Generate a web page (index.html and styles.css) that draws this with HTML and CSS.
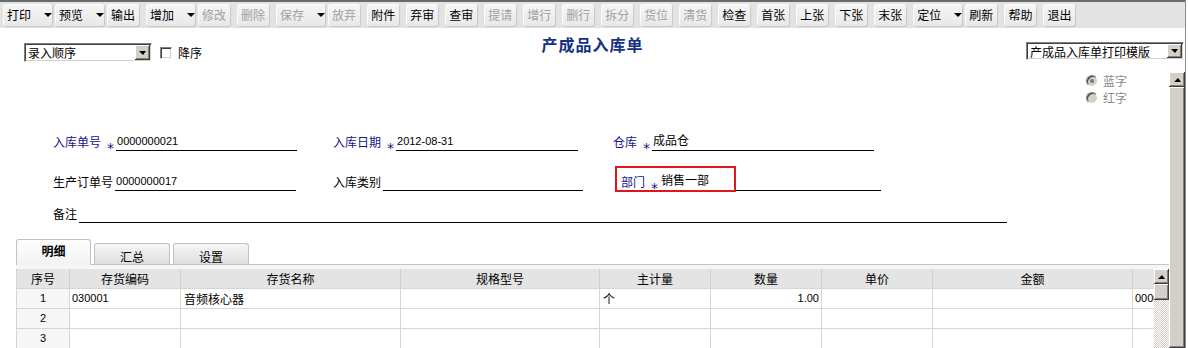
FILE: index.html
```html
<!DOCTYPE html>
<html lang="zh-CN">

<head>
    <meta charset="UTF-8">
    <title>产成品入库单</title>
    <link rel="stylesheet" href="styles.css">
</head>

<body>
    <div class="app">
        <!-- Toolbar -->
        <div class="toolbar">
            <span class="tb-btn drop">打印<i class="caret"></i></span>
            <span class="tb-btn drop">预览<i class="caret"></i></span>
            <span class="tb-btn">输出</span>
            <span class="tb-btn drop">增加<i class="caret"></i></span>
            <span class="tb-btn off">修改</span>
            <span class="tb-btn off">删除</span>
            <span class="tb-btn drop off">保存<i class="caret"></i></span>
            <span class="tb-btn off">放弃</span>
            <span class="tb-btn">附件</span>
            <span class="tb-btn">弃审</span>
            <span class="tb-btn">查审</span>
            <span class="tb-btn off">提请</span>
            <span class="tb-btn off">增行</span>
            <span class="tb-btn off">删行</span>
            <span class="tb-btn off">拆分</span>
            <span class="tb-btn off">货位</span>
            <span class="tb-btn off">清货</span>
            <span class="tb-btn">检查</span>
            <span class="tb-btn">首张</span>
            <span class="tb-btn">上张</span>
            <span class="tb-btn">下张</span>
            <span class="tb-btn">末张</span>
            <span class="tb-btn drop">定位<i class="caret"></i></span>
            <span class="tb-btn">刷新</span>
            <span class="tb-btn">帮助</span>
            <span class="tb-btn">退出</span>
        </div>

        <!-- Header -->
        <div class="head">
            <div class="head-left">
                <div class="combo combo-sort">
                    <span class="combo-text">录入顺序</span>
                    <span class="combo-btn"><i class="tri-down"></i></span>
                </div>
                <label class="check"><span class="check-box"></span>降序</label>
            </div>
            <h1 class="title">产成品入库单</h1>
            <div class="head-right">
                <div class="combo combo-tpl">
                    <span class="combo-text">产成品入库单打印模版</span>
                    <span class="combo-btn"><i class="tri-down"></i></span>
                </div>
            </div>
        </div>

        <div class="main">
            <div class="content">
                <div class="radios">
                    <label class="radio"><span class="radio-dot checked"></span>蓝字</label>
                    <label class="radio"><span class="radio-dot"></span>红字</label>
                </div>

                <!-- Form -->
                <div class="form">
                    <div class="form-row">
                        <div class="field">
                            <span class="lbl req">入库单号</span><span class="star">*</span>
                            <span class="val w181"><span class="num">0000000021</span></span>
                        </div>
                        <div class="field">
                            <span class="lbl req">入库日期</span><span class="star">*</span>
                            <span class="val w182"><span class="num">2012-08-31</span></span>
                        </div>
                        <div class="field">
                            <span class="lbl req">仓库</span><span class="star">*</span>
                            <span class="val w222">成品仓</span>
                        </div>
                    </div>
                    <div class="form-row">
                        <div class="field">
                            <span class="lbl">生产订单号</span>
                            <span class="val w181 gap"><span class="num">0000000017</span></span>
                        </div>
                        <div class="field">
                            <span class="lbl">入库类别</span>
                            <span class="val w200 gap"></span>
                        </div>
                        <div class="field dept">
                            <span class="lbl req">部门</span><span class="star">*</span>
                            <span class="val w221">销售一部</span>
                            <span class="mark"></span>
                        </div>
                    </div>
                    <div class="form-row note-row">
                        <div class="field">
                            <span class="lbl">备注</span>
                            <span class="val w928 gap"></span>
                        </div>
                    </div>
                </div>

                <!-- Tabs -->
                <div class="tabs">
                    <span class="tab active">明细</span>
                    <span class="tab">汇总</span>
                    <span class="tab">设置</span>
                </div>

                <!-- Grid -->
                <div class="panel">
                    <div class="grid-wrap">
                        <div class="grid">
                            <div class="grid-row grid-head">
                                <span>序号</span><span>存货编码</span><span>存货名称</span><span>规格型号</span><span>主计量</span><span>数量</span><span>单价</span><span>金额</span><span></span>
                            </div>
                            <div class="grid-row">
                                <span class="rn num">1</span><span class="num">030001</span><span>音频核心器</span><span></span><span>个</span><span class="num right">1.00</span><span></span><span></span><span class="num">0000</span>
                            </div>
                            <div class="grid-row">
                                <span class="rn num">2</span><span></span><span></span><span></span><span></span><span></span><span></span><span></span><span></span>
                            </div>
                            <div class="grid-row">
                                <span class="rn num">3</span><span></span><span></span><span></span><span></span><span></span><span></span><span></span><span></span>
                            </div>
                        </div>
                    </div>
                    <div class="vscroll inner">
                        <span class="sb-btn"><i class="tri-up"></i></span>
                        <span class="sb-thumb short"></span>
                        <span class="sb-track"></span>
                    </div>
                </div>
            </div>

            <div class="vscroll outer">
                <span class="sb-btn"><i class="tri-up"></i></span>
                <span class="sb-thumb"></span>
            </div>
        </div>
    </div>
</body>

</html>
```

FILE: styles.css
```css
/* General */
* {
    box-sizing: border-box;
}

body {
    margin: 0;
    background: #fff;
    color: #000;
    font: 12px/16px "Noto Sans CJK SC", "Liberation Sans", sans-serif;
    overflow: hidden;
}

.app {
    width: 1186px;
    height: 348px;
    border-right: 1px solid #8c8c8c;
    display: flex;
    flex-direction: column;
    overflow: hidden;
}

.num {
    font-family: "Liberation Sans", "Noto Sans CJK SC", sans-serif;
    font-size: 11px;
}

/* Toolbar */
.toolbar {
    flex: none;
    height: 28px;
    border-top: 2px solid #6b6b6b;
    background: #e3e3e3;
    display: flex;
    align-items: center;
    padding-left: 3px;
}

.tb-btn {
    height: 22px;
    display: flex;
    align-items: center;
    padding: 0 4px;
    margin-right: 7px;
    border-radius: 3px;
    background: linear-gradient(#f6f6f6, #e8e8e8);
    box-shadow: inset 1px 1px 0 #fcfcfc, 1px 1px 1px #c6c6c6;
    white-space: nowrap;
}

.tb-btn.off {
    color: #a0a0a0;
}

.tb-btn.drop {
    padding-right: 0;
    margin-right: 3px;
}

.caret {
    width: 0;
    height: 0;
    margin-left: 13px;
    border-left: 4px solid transparent;
    border-right: 4px solid transparent;
    border-top: 4px solid #000;
}

/* Header */
.head {
    flex: none;
    height: 44px;
    display: grid;
    grid-template-columns: 1fr auto 1fr;
}

.head-left {
    display: flex;
    align-items: center;
    align-self: start;
    padding: 15px 0 0 24px;
}

.title {
    margin: 7px 0 0;
    font-size: 16px;
    line-height: 18px;
    letter-spacing: 1px;
    font-weight: bold;
    color: #15327e;
}

.head-right {
    justify-self: end;
    padding: 14px 1px 0 0;
}

.combo {
    display: flex;
    align-items: center;
    height: 19px;
    padding: 1px;
    background: #fff;
    border: 1px solid;
    border-color: #808080 #fff #fff #808080;
    box-shadow: inset 1px 1px 0 #404040, inset -1px -1px 0 #d4d0c8;
}

.combo-sort {
    width: 128px;
}

.combo-tpl {
    width: 158px;
    height: 18px;
}

.combo-text {
    flex: 1;
    padding-left: 2px;
    line-height: 15px;
    white-space: nowrap;
}

.combo-btn {
    width: 15px;
    height: 100%;
    display: flex;
    align-items: center;
    justify-content: center;
    background: #d4d0c8;
    box-shadow: inset -1px -1px 0 #404040, inset 1px 1px 0 #fff, inset -2px -2px 0 #808080;
}

.tri-down,
.tri-up {
    width: 0;
    height: 0;
    border-left: 4px solid transparent;
    border-right: 3px solid transparent;
}

.tri-down {
    border-top: 4px solid #000;
}

.tri-up {
    border-bottom: 4px solid #000;
}

.check {
    display: flex;
    align-items: center;
    margin-left: 8px;
}

.check-box {
    width: 12px;
    height: 12px;
    margin-right: 6px;
    background: #fff;
    border: 1px solid;
    border-color: #808080 #fff #fff #808080;
    box-shadow: inset 1px 1px 0 #404040, inset -1px -1px 0 #d4d0c8;
}

/* Main area */
.main {
    flex: 1;
    display: flex;
    min-height: 0;
}

.content {
    width: 1169px;
    flex: none;
    overflow: hidden;
}

.radios {
    display: flex;
    flex-direction: column;
    align-items: flex-end;
    padding-right: 42px;
}

.radio {
    display: flex;
    align-items: center;
    height: 17px;
    color: #8a8a8a;
}

.radio-dot {
    width: 12px;
    height: 12px;
    margin-right: 5px;
    border-radius: 50%;
    background: #d4d0c8;
    border: 1px solid;
    border-color: #808080 #fff #fff #808080;
    box-shadow: inset 1px 1px 0 #404040;
    display: flex;
    align-items: center;
    justify-content: center;
}

.radio-dot.checked::after {
    content: "";
    width: 4px;
    height: 4px;
    border-radius: 50%;
    background: #7a7a7a;
}

/* Form */
.form {
    padding-left: 53px;
    margin-top: 25px;
}

.form-row {
    display: grid;
    grid-template-columns: 280px 280px 1fr;
    height: 20px;
}

.form-row + .form-row {
    margin-top: 20px;
}

.form-row.note-row {
    grid-template-columns: 1fr;
    margin-top: 12px;
}

.field {
    position: relative;
    display: flex;
    align-items: flex-end;
    height: 20px;
}

.lbl {
    line-height: 16px;
    margin-bottom: 1px;
    white-space: nowrap;
}

.lbl.req,
.star {
    color: #14148c;
}

.star {
    font-family: "DejaVu Sans", sans-serif;
    font-size: 14px;
    line-height: 14px;
    margin: 0 2px -4px 6px;
}

.val {
    height: 18px;
    line-height: 14px;
    padding: 0 0 3px 1px;
    border-bottom: 1px solid #000;
    white-space: nowrap;
}

.val.gap {
    margin-left: 2px;
}

.w181 { width: 181px; }
.w182 { width: 182px; }
.w200 { width: 200px; }
.w221 { width: 221px; }
.w222 { width: 222px; }
.w928 { width: 928px; }

.field.dept {
    padding-left: 8px;
}

/* highlight box around the department field */
.mark {
    position: absolute;
    left: 2px;
    top: -5px;
    width: 121px;
    height: 26px;
    border: 2px solid #e3141c;
}

/* Tabs */
.tabs {
    display: flex;
    align-items: flex-end;
    gap: 3px;
    height: 25px;
    margin-top: 16px;
    padding-left: 16px;
    position: relative;
    z-index: 1;
}

.tab {
    width: 76px;
    height: 21px;
    padding-top: 5px;
    text-align: center;
    border: 1px solid #c2c2c2;
    border-bottom: none;
    border-radius: 3px 3px 0 0;
    background: linear-gradient(#f6f6f6, #dedede);
}

.tab.active {
    width: 75px;
    height: 26px;
    margin-bottom: -1px;
    padding-top: 3px;
    font-weight: bold;
    background: linear-gradient(#fefefe, #f3f3f3);
}

/* Grid */
.panel {
    display: flex;
    margin-left: 16px;
    width: 1153px;
    height: 90px;
    padding-top: 4px;
    border-top: 1px solid #c4c4c4;
    background: #f6f6f6;
}

.grid-wrap {
    width: 1138px;
    overflow: hidden;
    background: #fff;
}

.grid {
    width: 1228px;
}

.grid-row {
    display: grid;
    grid-template-columns: 54px 111px 220px 199px 111px 111px 111px 200px 111px;
    height: 20px;
}

.grid-row span {
    height: 20px;
    line-height: 19px;
    padding: 0 3px;
    border-right: 1px solid #d6d6d6;
    border-bottom: 1px solid #d6d6d6;
    white-space: nowrap;
}

.grid-row span:first-child {
    border-left: 1px solid #d6d6d6;
}

.grid-row span.num {
    padding: 0 2px;
}

.grid-head span {
    background: #e4e4e4;
    text-align: center;
    border-right-color: #d0d0d0;
}

.grid-row span.rn {
    text-align: center;
    background: #f7f7f7;
}

.grid-row span.right {
    text-align: right;
}

/* Scrollbars */
.vscroll {
    flex: none;
    display: flex;
    flex-direction: column;
    background: #d4d0c8;
}

.vscroll.outer {
    width: 16px;
}

.vscroll.inner {
    width: 15px;
}

.sb-btn,
.sb-thumb {
    flex: none;
    height: 15px;
    display: flex;
    align-items: center;
    justify-content: center;
    background: #d4d0c8;
    box-shadow: inset -1px -1px 0 #404040, inset 1px 1px 0 #fff, inset -2px -2px 0 #808080;
}

.sb-thumb {
    flex: 1;
}

.sb-thumb.short {
    flex: none;
    height: 16px;
}

.sb-track {
    flex: 1;
    background: repeating-conic-gradient(#d4d0c8 0 25%, #fff 0 50%) 0 0 / 2px 2px;
}
```
